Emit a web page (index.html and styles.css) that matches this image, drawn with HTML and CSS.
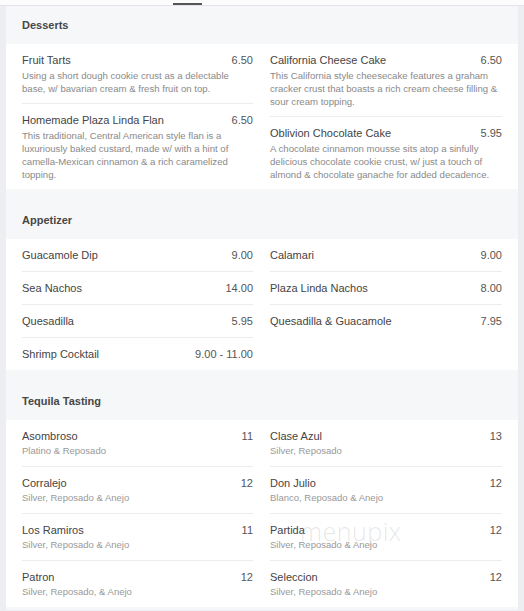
FILE: index.html
```html
<!DOCTYPE html>
<html lang="en">
<head>
<meta charset="utf-8">
<title>Menu</title>
<link rel="stylesheet" href="styles.css">
</head>
<body>
<div class="topbar"><span class="tab"></span></div>
<main class="menu">
  <section class="section">
    <h2 class="section-title">Desserts</h2>
    <div class="card">
      <div class="col">
        <div class="item">
          <div class="row"><span class="name">Fruit Tarts</span><span class="price">6.50</span></div>
          <p class="desc">Using a short dough cookie crust as a delectable base, w/ bavarian cream &amp; fresh fruit on top.</p>
        </div>
        <div class="item">
          <div class="row"><span class="name">Homemade Plaza Linda Flan</span><span class="price">6.50</span></div>
          <p class="desc">This traditional, Central American style flan is a luxuriously baked custard, made w/ with a hint of camella-Mexican cinnamon &amp; a rich caramelized topping.</p>
        </div>
      </div>
      <div class="col">
        <div class="item">
          <div class="row"><span class="name">California Cheese Cake</span><span class="price">6.50</span></div>
          <p class="desc">This California style cheesecake features a graham cracker crust that boasts a rich cream cheese filling &amp; sour cream topping.</p>
        </div>
        <div class="item">
          <div class="row"><span class="name">Oblivion Chocolate Cake</span><span class="price">5.95</span></div>
          <p class="desc">A chocolate cinnamon mousse sits atop a sinfully delicious chocolate cookie crust, w/ just a touch of almond &amp; chocolate ganache for added decadence.</p>
        </div>
      </div>
    </div>
  </section>

  <section class="section">
    <h2 class="section-title">Appetizer</h2>
    <div class="card">
      <div class="col">
        <div class="item"><div class="row"><span class="name">Guacamole Dip</span><span class="price">9.00</span></div></div>
        <div class="item"><div class="row"><span class="name">Sea Nachos</span><span class="price">14.00</span></div></div>
        <div class="item"><div class="row"><span class="name">Quesadilla</span><span class="price">5.95</span></div></div>
        <div class="item"><div class="row"><span class="name">Shrimp Cocktail</span><span class="price">9.00 - 11.00</span></div></div>
      </div>
      <div class="col">
        <div class="item"><div class="row"><span class="name">Calamari</span><span class="price">9.00</span></div></div>
        <div class="item"><div class="row"><span class="name">Plaza Linda Nachos</span><span class="price">8.00</span></div></div>
        <div class="item"><div class="row"><span class="name">Quesadilla &amp; Guacamole</span><span class="price">7.95</span></div></div>
      </div>
    </div>
  </section>

  <section class="section">
    <h2 class="section-title">Tequila Tasting</h2>
    <div class="card">
      <div class="col">
        <div class="item"><div class="row"><span class="name">Asombroso</span><span class="price">11</span></div><p class="sub">Platino &amp; Reposado</p></div>
        <div class="item"><div class="row"><span class="name">Corralejo</span><span class="price">12</span></div><p class="sub">Silver, Reposado &amp; Anejo</p></div>
        <div class="item"><div class="row"><span class="name">Los Ramiros</span><span class="price">11</span></div><p class="sub">Silver, Reposado &amp; Anejo</p></div>
        <div class="item"><div class="row"><span class="name">Patron</span><span class="price">12</span></div><p class="sub">Silver, Reposado, &amp; Anejo</p></div>
      </div>
      <div class="col">
        <div class="item"><div class="row"><span class="name">Clase Azul</span><span class="price">13</span></div><p class="sub">Silver, Reposado</p></div>
        <div class="item"><div class="row"><span class="name">Don Julio</span><span class="price">12</span></div><p class="sub">Blanco, Reposado &amp; Anejo</p></div>
        <div class="item"><div class="row"><span class="name">Partida</span><span class="price">12</span></div><p class="sub">Silver, Reposado &amp; Anejo</p></div>
        <div class="item"><div class="row"><span class="name">Seleccion</span><span class="price">12</span></div><p class="sub">Silver, Reposado &amp; Anejo</p></div>
      </div>
    </div>
    <span class="watermark">menupix</span>
  </section>
</main>
</body>
</html>
```

FILE: styles.css
```css
html, body {
  margin: 0;
  padding: 0;
}
body {
  background: #eceef2;
  font-family: "Liberation Sans", Arial, sans-serif;
  color: #444;
}
.topbar {
  height: 5px;
  background: #fcfcfd;
  border-bottom: 1px solid #e3e4e8;
}
.tab {
  display: block;
  margin-left: 173px;
  width: 29px;
  height: 2px;
  position: relative;
  top: 3px;
  background: #555;
}
.menu {
  margin: 0 6px;
  background: #f6f7f9;
}
.section {
  padding-bottom: 12px;
  position: relative;
}
.section:last-child {
  padding-bottom: 3px;
}
.section-title {
  margin: 0;
  height: 38px;
  line-height: 38px;
  padding-left: 16px;
  font-size: 11px;
  font-weight: bold;
  color: #474747;
}
.card {
  background: #fff;
  display: grid;
  grid-template-columns: 231px 232px;
  column-gap: 17px;
  padding: 0 16px;
  align-items: start;
}
.item {
  padding: 8px 0;
  border-bottom: 1px solid #ececef;
}
.item:last-child {
  border-bottom: none;
}
.row {
  display: flex;
  justify-content: space-between;
  font-size: 11px;
  line-height: 16px;
  color: #444;
}
.price {
  color: #555;
}
.desc {
  margin: 1px 0 0;
  font-size: 9.6px;
  line-height: 13px;
  color: #8a8a8a;
}
.sub {
  margin: 0;
  font-size: 9.5px;
  line-height: 14px;
  color: #999;
}
.watermark {
  position: absolute;
  left: 294px;
  top: 132px;
  font-size: 25px;
  letter-spacing: 0.5px;
  font-family: "Open Sans", "Liberation Sans", sans-serif;
  font-weight: 300;
  color: rgba(120, 120, 120, 0.18);
  pointer-events: none;
}
```
